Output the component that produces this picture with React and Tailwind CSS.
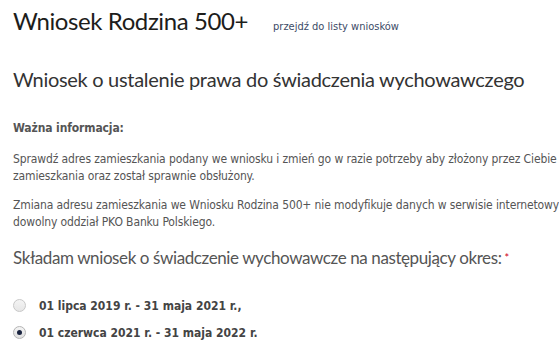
export default function App() {
  const body = { fontFamily: '"DejaVu Sans Condensed", "Liberation Sans", sans-serif' };
  const head = { fontFamily: 'Lato, "Liberation Sans", sans-serif' };
  return (
    <div className="w-[559px] h-[355px] overflow-hidden bg-white pl-[13px]">
      <div className="flex items-baseline pt-[5px] h-[44px] whitespace-nowrap">
        <h1 className="text-[24px] tracking-[-0.4px] leading-[32px] text-[#1d1d1b]" style={head}>Wniosek Rodzina 500+</h1>
        <a className="ml-[25px] text-[11px] text-[#3b4a66]" style={body}>przejdź do listy wniosków</a>
      </div>
      <h2 className="mt-[20px] text-[20px] tracking-[-0.3px] leading-[30px] text-[#333] whitespace-nowrap" style={head}>
        Wniosek o ustalenie prawa do świadczenia wychowawczego
      </h2>
      <div className="mt-[26px] text-[12px] leading-[17px] text-[#555] whitespace-nowrap tracking-[-0.12px]" style={body}>
        <p className="font-bold">Ważna informacja:</p>
        <p className="mt-[14px]">
          Sprawdź adres zamieszkania podany we wniosku i zmień go w razie potrzeby aby złożony przez Ciebie wniosek trafił do właściwego urzędu<br />
          zamieszkania oraz został sprawnie obsłużony.
        </p>
        <p className="mt-[12px]">
          Zmiana adresu zamieszkania we Wniosku Rodzina 500+ nie modyfikuje danych w serwisie internetowym. Aby to zrobić odwiedź<br />
          dowolny oddział PKO Banku Polskiego.
        </p>
      </div>
      <div className="mt-[14px] text-[17px] tracking-[-0.4px] leading-[26px] text-[#555] whitespace-nowrap" style={head}>
        Składam wniosek o świadczenie wychowawcze na następujący okres:<span className="text-[#d0021b] text-[11px] align-top ml-[3px]">*</span>
      </div>
      <div className="mt-[28px] flex flex-col gap-[14px] text-[12px] text-[#444] font-bold" style={body}>
        <label className="flex items-center h-[13px]">
          <span className="w-[13px] h-[13px] rounded-full border border-[#c8c8c8] bg-gradient-to-b from-[#f4f4f4] to-[#e6e6e6]"></span>
          <span className="ml-[13px]">01 lipca 2019 r. - 31 maja 2021 r.,</span>
        </label>
        <label className="flex items-center h-[13px]">
          <span className="w-[13px] h-[13px] rounded-full border border-[#b5b5b5] bg-gradient-to-b from-[#f4f4f4] to-[#e0e0e0] flex items-center justify-center">
            <span className="w-[5px] h-[5px] rounded-full bg-[#1a2440]"></span>
          </span>
          <span className="ml-[13px]">01 czerwca 2021 r. - 31 maja 2022 r.</span>
        </label>
      </div>
    </div>
  );
}
